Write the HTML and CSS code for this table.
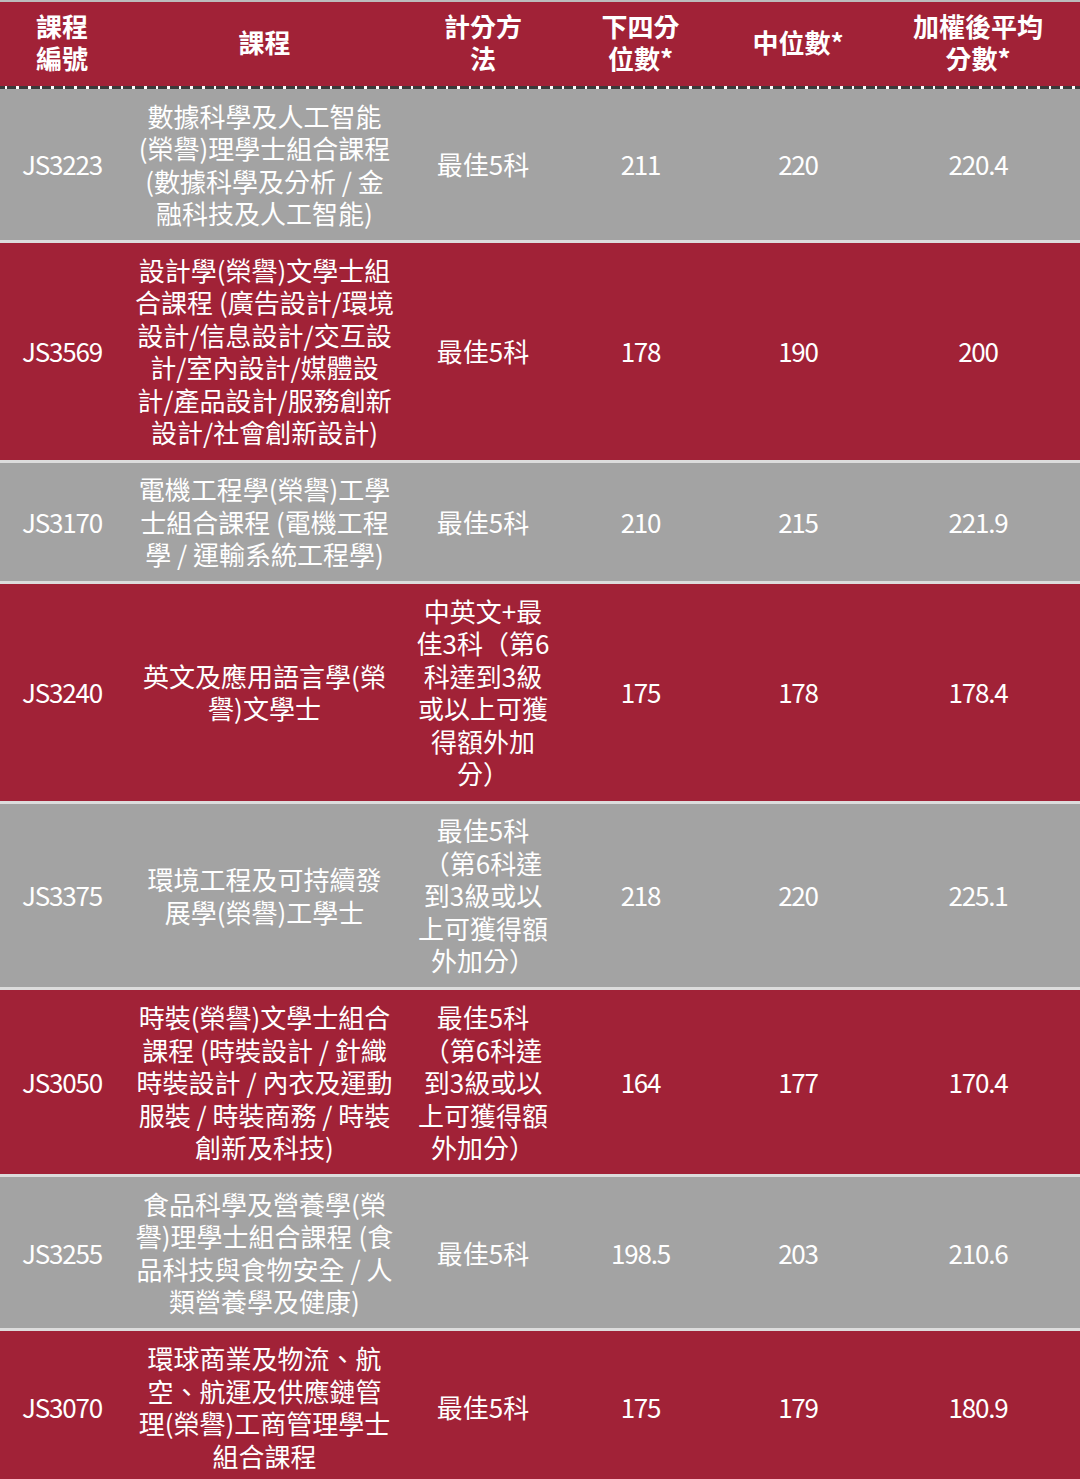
FILE: index.html
```html
<!DOCTYPE html>
<html lang="zh-Hant">
<head>
<meta charset="utf-8">
<title>課程分數</title>
<link rel="stylesheet" href="styles.css">
</head>
<body>
<div class="table">
  <div class="row head">
    <div class="cell">課程<br>編號</div>
    <div class="cell c-course">課程</div>
    <div class="cell c-method">計分方<br>法</div>
    <div class="cell">下四分<br>位數*</div>
    <div class="cell">中位數*</div>
    <div class="cell">加權後平均<br>分數*</div>
  </div>
  <div class="row grey">
    <div class="cell num">JS3223</div>
    <div class="cell c-course">數據科學及人工智能(榮譽)理學士組合課程(數據科學及分析 / 金融科技及人工智能)</div>
    <div class="cell c-method">最佳5科</div>
    <div class="cell num">211</div>
    <div class="cell num">220</div>
    <div class="cell num">220.4</div>
  </div>
  <div class="row red">
    <div class="cell num">JS3569</div>
    <div class="cell c-course">設計學(榮譽)文學士組合課程 (廣告設計/環境設計/信息設計/交互設計/室內設計/媒體設計/產品設計/服務創新設計/社會創新設計)</div>
    <div class="cell c-method">最佳5科</div>
    <div class="cell num">178</div>
    <div class="cell num">190</div>
    <div class="cell num">200</div>
  </div>
  <div class="row grey">
    <div class="cell num">JS3170</div>
    <div class="cell c-course">電機工程學(榮譽)工學士組合課程 (電機工程學 / 運輸系統工程學)</div>
    <div class="cell c-method">最佳5科</div>
    <div class="cell num">210</div>
    <div class="cell num">215</div>
    <div class="cell num">221.9</div>
  </div>
  <div class="row red">
    <div class="cell num">JS3240</div>
    <div class="cell c-course">英文及應用語言學(榮譽)文學士</div>
    <div class="cell c-method">中英文+最佳3科（第6科達到3級或以上可獲得額外加分）</div>
    <div class="cell num">175</div>
    <div class="cell num">178</div>
    <div class="cell num">178.4</div>
  </div>
  <div class="row grey">
    <div class="cell num">JS3375</div>
    <div class="cell c-course">環境工程及可持續發展學(榮譽)工學士</div>
    <div class="cell c-method">最佳5科（第6科達到3級或以上可獲得額外加分）</div>
    <div class="cell num">218</div>
    <div class="cell num">220</div>
    <div class="cell num">225.1</div>
  </div>
  <div class="row red">
    <div class="cell num">JS3050</div>
    <div class="cell c-course">時裝(榮譽)文學士組合課程 (時裝設計 / 針織時裝設計 / 內衣及運動服裝 / 時裝商務 / 時裝創新及科技)</div>
    <div class="cell c-method">最佳5科（第6科達到3級或以上可獲得額外加分）</div>
    <div class="cell num">164</div>
    <div class="cell num">177</div>
    <div class="cell num">170.4</div>
  </div>
  <div class="row grey">
    <div class="cell num">JS3255</div>
    <div class="cell c-course">食品科學及營養學(榮譽)理學士組合課程 (食品科技與食物安全 / 人類營養學及健康)</div>
    <div class="cell c-method">最佳5科</div>
    <div class="cell num">198.5</div>
    <div class="cell num">203</div>
    <div class="cell num">210.6</div>
  </div>
  <div class="row red">
    <div class="cell num">JS3070</div>
    <div class="cell c-course">環球商業及物流、航空、航運及供應鏈管理(榮譽)工商管理學士組合課程</div>
    <div class="cell c-method">最佳5科</div>
    <div class="cell num">175</div>
    <div class="cell num">179</div>
    <div class="cell num">180.9</div>
  </div>
</div>
</body>
</html>
```
FILE: styles.css
```css
html, body {
  margin: 0;
  padding: 0;
  background: #a12237;
}
body {
  font-family: "Noto Sans CJK TC", "Noto Sans", sans-serif;
  color: #ffffff;
}
.table {
  width: 1080px;
  border-top: 2px solid #bcbcbc;
}
.row {
  display: grid;
  grid-template-columns: 124px 281px 156px 159px 156px 1fr;
  border-top: 3px solid #dcdcdc;
}
.row.head {
  border-top: none;
  background: #a12237;
  font-weight: 700;
  font-size: 26px;
  line-height: 32px;
  position: relative;
  padding-bottom: 3px;
}
.row.head::after {
  content: "";
  position: absolute;
  left: 0;
  right: 0;
  bottom: 0;
  height: 3px;
  background: repeating-linear-gradient(90deg, #3a3a3a 0, #3a3a3a 4.7px, #ffffff 4.7px, #ffffff 7.4px, #3a3a3a 7.4px, #3a3a3a 11.6px);
}
.row.head + .row {
  border-top: none;
}
.row.grey {
  background: #a3a3a3;
}
.row.red {
  background: #a12237;
}
.cell {
  display: flex;
  align-items: center;
  justify-content: center;
  text-align: center;
  padding: 10.65px 4px;
  font-size: 26px;
  line-height: 32.5px;
}
.cell.num {
  letter-spacing: -1.2px;
}
.row.head .cell {
  padding: 8px 4px 12px;
  line-height: 32px;
}
.cell.c-course {
  padding-left: 11px;
  padding-right: 11px;
}
.cell.c-method {
  padding-left: 9px;
  padding-right: 9px;
}
```
